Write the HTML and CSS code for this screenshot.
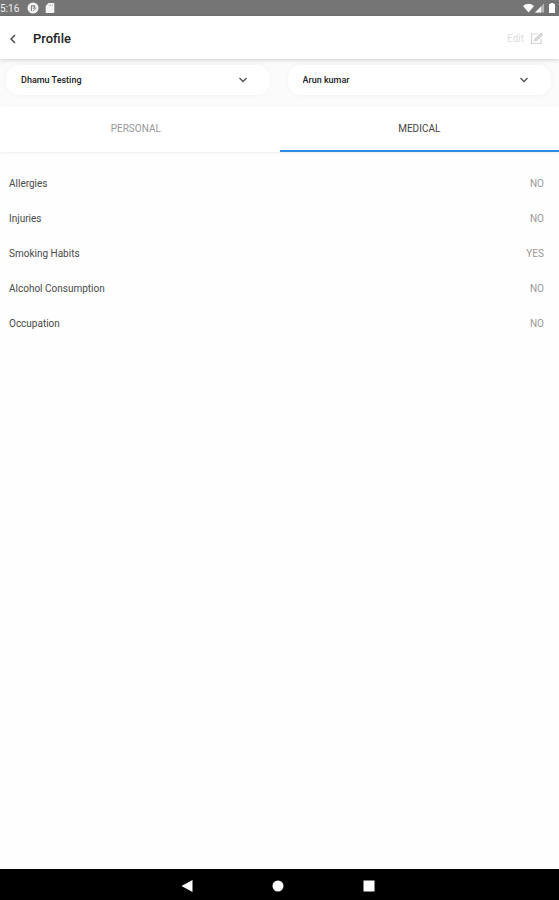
FILE: index.html
```html
<!DOCTYPE html>
<html lang="en">
<head>
<meta charset="utf-8">
<meta name="viewport" content="width=device-width, initial-scale=1">
<title>Profile</title>
<link rel="stylesheet" href="styles.css">
</head>
<body>
<div class="status">
  <span class="time">5:16</span>
  <svg class="status-app" width="12" height="12" viewBox="0 0 12 12"><circle cx="6" cy="6" r="5.500" fill="#f4f4f4"/><path d="M4.500 9V3.800h3.200v2.400H6" fill="none" stroke="#858585" stroke-width="1.200"/><path d="M6 9l3.500-3" stroke="#9a9a9a"/></svg>
  <svg width="10" height="12" viewBox="0 0 10 12"><path d="M3.500 1H8.500a.8.8 0 0 1 .8.8v8.400a.8.8 0 0 1-.8.8h-7a.8.8 0 0 1-.8-.8V4z" fill="#f4f4f4"/><path d="M4 2.500v1.700M5.700 2.500v1.700M7.400 2.500v1.700" stroke="#aaa" stroke-width=".7"/></svg>
  <svg class="signals" width="36" height="12" viewBox="0 0 36 12"><path d="M0 4Q5.500 -.5 11 4L5.500 10.500z" fill="#fff"/><path d="M12 10.500L21 1.500v9z" fill="#b5b5b5"/><path d="M12 10.500L18 4.500v6z" fill="#f4f4f4"/><path d="M26 2h1.500V1h3v1H32v9h-6z" fill="#fff"/></svg>
</div>
<header class="header">
  <button class="back" type="button" aria-label="Back"><svg width="8" height="10" viewBox="0 0 8 10"><path d="M6 1L2 5l4 4" fill="none" stroke="#444" stroke-width="1.400"/></svg></button>
  <h1>Profile</h1>
  <button class="edit" type="button">Edit
    <svg width="14" height="13" viewBox="0 0 14 13"><path d="M8 2H1.500v9.500H11V7" fill="none" stroke="#d4d4d4" stroke-width="1.200"/><path d="M4.500 9l.6-2.500L11 1l2 1.700L7 8.400z" fill="#dadada" stroke="#cacaca" stroke-width=".8"/></svg>
  </button>
</header>
<div class="pickers">
  <div class="picker">
    <select aria-label="Account"><option>Dhamu Testing</option></select>
    <svg width="10" height="8" viewBox="0 0 10 8"><path d="M1.500 2L5 5.500 8.500 2" fill="none" stroke="#555" stroke-width="1.400"/></svg>
  </div>
  <div class="picker">
    <select aria-label="Member"><option>Arun kumar</option></select>
    <svg width="10" height="8" viewBox="0 0 10 8"><path d="M1.500 2L5 5.500 8.500 2" fill="none" stroke="#555" stroke-width="1.400"/></svg>
  </div>
</div>
<nav class="tabs">
  <button class="tab" type="button">PERSONAL</button>
  <button class="tab active" type="button">MEDICAL</button>
</nav>
<main>
  <dl class="facts">
    <div class="fact"><dt>Allergies</dt><dd>NO</dd></div>
    <div class="fact"><dt>Injuries</dt><dd>NO</dd></div>
    <div class="fact"><dt>Smoking Habits</dt><dd>YES</dd></div>
    <div class="fact"><dt>Alcohol Consumption</dt><dd>NO</dd></div>
    <div class="fact"><dt>Occupation</dt><dd>NO</dd></div>
  </dl>
</main>
<footer class="system">
  <button type="button" aria-label="System back"><svg width="12" height="14" viewBox="0 0 12 14"><path d="M.5 7L11.500 1v12z" fill="#fff"/></svg></button>
  <button type="button" aria-label="Home"><svg width="12" height="14" viewBox="0 0 12 14"><circle cx="6" cy="7" r="5.500" fill="#fff"/></svg></button>
  <button type="button" aria-label="Recent apps"><svg width="12" height="14" viewBox="0 0 12 14"><path d="M.5 1.500h11v11H.5z" fill="#fff"/></svg></button>
</footer>
</body>
</html>
```
FILE: styles.css
```css
* {
  box-sizing: border-box;
}

body {
  margin: 0;
  min-height: 100vh;
  display: flex;
  flex-direction: column;
  background: #fefefe;
  color: #4a4a4a;
  font: 10px/15px Roboto, "Liberation Sans", sans-serif;
}

button,
select {
  margin: 0;
  padding: 0;
  border: 0;
  background: none;
  color: inherit;
  font: inherit;
}

svg {
  display: block;
  flex: none;
}

.status {
  display: flex;
  align-items: center;
  height: 16px;
  background: #757575;
  color: #eee;
}

.status-app {
  margin: 0 6px 0 8px;
}

.signals {
  margin-left: auto;
}

.header {
  display: flex;
  align-items: center;
  height: 43px;
  padding: 2px 15px 0 9px;
  background: #fff;
  box-shadow: 0 1px 4px rgba(0, 0, 0, 0.18);
  z-index: 1;
}

h1 {
  margin: 0 0 0 16px;
  color: #222;
  font-size: 13px;
  font-weight: 500;
}

.edit {
  display: flex;
  align-items: center;
  gap: 6px;
  margin-left: auto;
  color: #dedede;
}

.pickers {
  display: grid;
  grid-template-columns: 1fr 1fr;
  gap: 18px;
  padding: 6px 8px 12px 6px;
  background: #fbfbfb;
}

.picker {
  display: grid;
  grid-template-columns: 1fr auto;
  align-items: center;
  height: 30px;
  padding-right: 22px;
  border-radius: 13px;
  background: #fff;
  box-shadow: 0 0 4px rgba(0, 0, 0, 0.05);
}

.picker select {
  grid-area: 1 / 1 / 2 / 3;
  height: 30px;
  padding-left: 15px;
  appearance: none;
  color: #222;
  font-size: 9px;
  font-weight: 500;
}

.picker svg {
  grid-area: 1 / 2;
  pointer-events: none;
}

.tabs {
  display: grid;
  grid-template-columns: 1fr 1fr;
  height: 45px;
  background: #fff;
  box-shadow: 0 1px 2px rgba(0, 0, 0, 0.06);
}

.tab {
  padding-right: 8px;
  border-bottom: 2px solid transparent;
  color: #999;
}

.tab.active {
  padding: 0;
  border-bottom-color: #2b8ce0;
  color: #444;
}

main {
  flex: 1;
  padding: 24px 15px 24px 9px;
}

.facts {
  display: grid;
  gap: 20px;
  margin: 0;
}

.fact {
  display: flex;
  justify-content: space-between;
}

dd {
  margin: 0;
  color: #999;
}

.system {
  display: flex;
  justify-content: center;
  align-items: center;
  gap: 79px;
  height: 31px;
  padding-right: 3px;
  padding-top: 2px;
  background: #000;
}
```
